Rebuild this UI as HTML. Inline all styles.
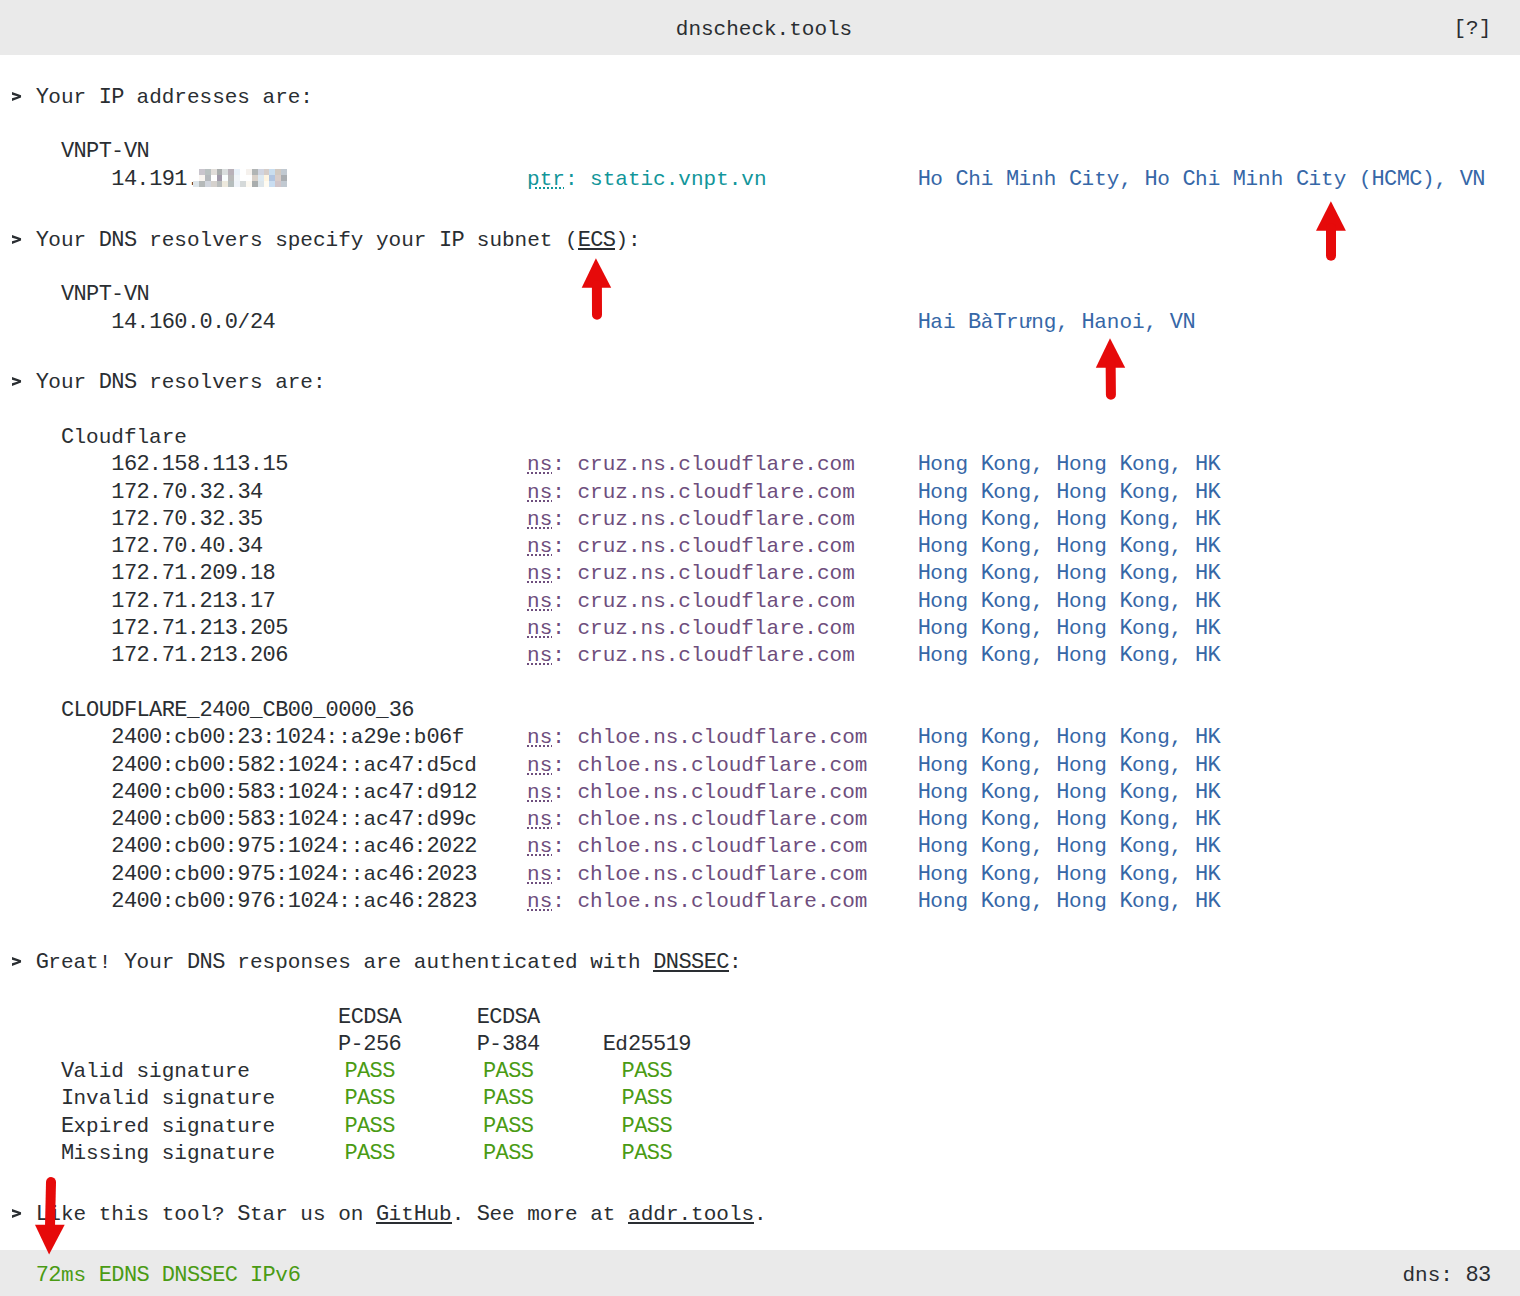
<!DOCTYPE html>
<html><head><meta charset="utf-8"><style>
html,body{margin:0;padding:0;background:#fff;width:1520px;height:1296px;overflow:hidden;position:relative}
body{font-family:"Liberation Mono",monospace;font-size:21.0px;color:#2a2e32}
.l{position:absolute;white-space:pre;line-height:27.3px;letter-spacing:0.000px}
.b{font-weight:bold;font-size:19px;letter-spacing:0.6px}
.c{font-size:22.0px;letter-spacing:-0.600px;line-height:0}
.teal{color:#12969a} .purp{color:#6e4e7d} .blue{color:#3667a7} .grn{color:#4a9b14}
u{text-decoration:none;position:relative}
u::after{content:'';position:absolute;left:0;right:0;top:19px;height:2px;background:currentColor}
.dt{text-decoration:underline dotted;text-decoration-thickness:2px;text-underline-offset:2px}
#hdr{position:absolute;left:0;top:0;width:1520px;height:55px;background:#eaeaea}
#ftr{position:absolute;left:0;top:1250px;width:1520px;height:46px;background:#eaeaea}
i{position:absolute;display:block}
svg{position:absolute;left:0;top:0}
</style></head><body>
<div id="hdr"></div>
<div id="ftr"></div>
<div class="l" style="left:675.8px;top:16.00px">dnscheck.tools</div>
<div class="l" style="left:1453.5px;top:15.00px">[?]</div>
<div class="l " style="left:35.70px;top:84.00px"><span class="c">Y</span>our <span class="c">IP</span> addresses are:</div>
<div class="l " style="left:60.90px;top:138.00px"><span class="c">VNPT</span>-<span class="c">VN</span></div>
<div class="l " style="left:111.30px;top:166.00px"><span class="c">14</span>.<span class="c">191</span>.</div>
<div class="l teal" style="left:527.10px;top:166.00px"><span class="dt">ptr</span>: static.vnpt.vn</div>
<div class="l blue" style="left:917.70px;top:166.00px"><span class="c">H</span>o <span class="c">C</span>hi <span class="c">M</span>inh <span class="c">C</span>ity, <span class="c">H</span>o <span class="c">C</span>hi <span class="c">M</span>inh <span class="c">C</span>ity (<span class="c">HCMC</span>), <span class="c">VN</span></div>
<div class="l " style="left:35.70px;top:227.00px"><span class="c">Y</span>our <span class="c">DNS</span> resolvers specify your <span class="c">IP</span> subnet (<u><span class="c">ECS</span></u>):</div>
<div class="l " style="left:60.90px;top:281.00px"><span class="c">VNPT</span>-<span class="c">VN</span></div>
<div class="l " style="left:111.30px;top:309.00px"><span class="c">14</span>.<span class="c">160</span>.<span class="c">0</span>.<span class="c">0</span>/<span class="c">24</span></div>
<div class="l blue" style="left:917.70px;top:309.00px"><span class="c">H</span>ai <span class="c">B</span>à<span class="c">T</span>rưng, <span class="c">H</span>anoi, <span class="c">VN</span></div>
<div class="l " style="left:35.70px;top:369.00px"><span class="c">Y</span>our <span class="c">DNS</span> resolvers are:</div>
<div class="l " style="left:60.90px;top:424.00px"><span class="c">C</span>loudflare</div>
<div class="l " style="left:111.30px;top:451.00px"><span class="c">162</span>.<span class="c">158</span>.<span class="c">113</span>.<span class="c">15</span></div>
<div class="l purp" style="left:527.10px;top:451.00px"><span class="dt">ns</span>: cruz.ns.cloudflare.com</div>
<div class="l blue" style="left:917.70px;top:451.00px"><span class="c">H</span>ong <span class="c">K</span>ong, <span class="c">H</span>ong <span class="c">K</span>ong, <span class="c">HK</span></div>
<div class="l " style="left:111.30px;top:479.00px"><span class="c">172</span>.<span class="c">70</span>.<span class="c">32</span>.<span class="c">34</span></div>
<div class="l purp" style="left:527.10px;top:479.00px"><span class="dt">ns</span>: cruz.ns.cloudflare.com</div>
<div class="l blue" style="left:917.70px;top:479.00px"><span class="c">H</span>ong <span class="c">K</span>ong, <span class="c">H</span>ong <span class="c">K</span>ong, <span class="c">HK</span></div>
<div class="l " style="left:111.30px;top:506.00px"><span class="c">172</span>.<span class="c">70</span>.<span class="c">32</span>.<span class="c">35</span></div>
<div class="l purp" style="left:527.10px;top:506.00px"><span class="dt">ns</span>: cruz.ns.cloudflare.com</div>
<div class="l blue" style="left:917.70px;top:506.00px"><span class="c">H</span>ong <span class="c">K</span>ong, <span class="c">H</span>ong <span class="c">K</span>ong, <span class="c">HK</span></div>
<div class="l " style="left:111.30px;top:533.00px"><span class="c">172</span>.<span class="c">70</span>.<span class="c">40</span>.<span class="c">34</span></div>
<div class="l purp" style="left:527.10px;top:533.00px"><span class="dt">ns</span>: cruz.ns.cloudflare.com</div>
<div class="l blue" style="left:917.70px;top:533.00px"><span class="c">H</span>ong <span class="c">K</span>ong, <span class="c">H</span>ong <span class="c">K</span>ong, <span class="c">HK</span></div>
<div class="l " style="left:111.30px;top:560.00px"><span class="c">172</span>.<span class="c">71</span>.<span class="c">209</span>.<span class="c">18</span></div>
<div class="l purp" style="left:527.10px;top:560.00px"><span class="dt">ns</span>: cruz.ns.cloudflare.com</div>
<div class="l blue" style="left:917.70px;top:560.00px"><span class="c">H</span>ong <span class="c">K</span>ong, <span class="c">H</span>ong <span class="c">K</span>ong, <span class="c">HK</span></div>
<div class="l " style="left:111.30px;top:588.00px"><span class="c">172</span>.<span class="c">71</span>.<span class="c">213</span>.<span class="c">17</span></div>
<div class="l purp" style="left:527.10px;top:588.00px"><span class="dt">ns</span>: cruz.ns.cloudflare.com</div>
<div class="l blue" style="left:917.70px;top:588.00px"><span class="c">H</span>ong <span class="c">K</span>ong, <span class="c">H</span>ong <span class="c">K</span>ong, <span class="c">HK</span></div>
<div class="l " style="left:111.30px;top:615.00px"><span class="c">172</span>.<span class="c">71</span>.<span class="c">213</span>.<span class="c">205</span></div>
<div class="l purp" style="left:527.10px;top:615.00px"><span class="dt">ns</span>: cruz.ns.cloudflare.com</div>
<div class="l blue" style="left:917.70px;top:615.00px"><span class="c">H</span>ong <span class="c">K</span>ong, <span class="c">H</span>ong <span class="c">K</span>ong, <span class="c">HK</span></div>
<div class="l " style="left:111.30px;top:642.00px"><span class="c">172</span>.<span class="c">71</span>.<span class="c">213</span>.<span class="c">206</span></div>
<div class="l purp" style="left:527.10px;top:642.00px"><span class="dt">ns</span>: cruz.ns.cloudflare.com</div>
<div class="l blue" style="left:917.70px;top:642.00px"><span class="c">H</span>ong <span class="c">K</span>ong, <span class="c">H</span>ong <span class="c">K</span>ong, <span class="c">HK</span></div>
<div class="l " style="left:60.90px;top:697.00px"><span class="c">CLOUDFLARE</span>_<span class="c">2400</span>_<span class="c">CB00</span>_<span class="c">0000</span>_<span class="c">36</span></div>
<div class="l " style="left:111.30px;top:724.00px"><span class="c">2400</span>:cb<span class="c">00</span>:<span class="c">23</span>:<span class="c">1024</span>::a<span class="c">29</span>e:b<span class="c">06</span>f</div>
<div class="l purp" style="left:527.10px;top:724.00px"><span class="dt">ns</span>: chloe.ns.cloudflare.com</div>
<div class="l blue" style="left:917.70px;top:724.00px"><span class="c">H</span>ong <span class="c">K</span>ong, <span class="c">H</span>ong <span class="c">K</span>ong, <span class="c">HK</span></div>
<div class="l " style="left:111.30px;top:752.00px"><span class="c">2400</span>:cb<span class="c">00</span>:<span class="c">582</span>:<span class="c">1024</span>::ac<span class="c">47</span>:d<span class="c">5</span>cd</div>
<div class="l purp" style="left:527.10px;top:752.00px"><span class="dt">ns</span>: chloe.ns.cloudflare.com</div>
<div class="l blue" style="left:917.70px;top:752.00px"><span class="c">H</span>ong <span class="c">K</span>ong, <span class="c">H</span>ong <span class="c">K</span>ong, <span class="c">HK</span></div>
<div class="l " style="left:111.30px;top:779.00px"><span class="c">2400</span>:cb<span class="c">00</span>:<span class="c">583</span>:<span class="c">1024</span>::ac<span class="c">47</span>:d<span class="c">912</span></div>
<div class="l purp" style="left:527.10px;top:779.00px"><span class="dt">ns</span>: chloe.ns.cloudflare.com</div>
<div class="l blue" style="left:917.70px;top:779.00px"><span class="c">H</span>ong <span class="c">K</span>ong, <span class="c">H</span>ong <span class="c">K</span>ong, <span class="c">HK</span></div>
<div class="l " style="left:111.30px;top:806.00px"><span class="c">2400</span>:cb<span class="c">00</span>:<span class="c">583</span>:<span class="c">1024</span>::ac<span class="c">47</span>:d<span class="c">99</span>c</div>
<div class="l purp" style="left:527.10px;top:806.00px"><span class="dt">ns</span>: chloe.ns.cloudflare.com</div>
<div class="l blue" style="left:917.70px;top:806.00px"><span class="c">H</span>ong <span class="c">K</span>ong, <span class="c">H</span>ong <span class="c">K</span>ong, <span class="c">HK</span></div>
<div class="l " style="left:111.30px;top:833.00px"><span class="c">2400</span>:cb<span class="c">00</span>:<span class="c">975</span>:<span class="c">1024</span>::ac<span class="c">46</span>:<span class="c">2022</span></div>
<div class="l purp" style="left:527.10px;top:833.00px"><span class="dt">ns</span>: chloe.ns.cloudflare.com</div>
<div class="l blue" style="left:917.70px;top:833.00px"><span class="c">H</span>ong <span class="c">K</span>ong, <span class="c">H</span>ong <span class="c">K</span>ong, <span class="c">HK</span></div>
<div class="l " style="left:111.30px;top:861.00px"><span class="c">2400</span>:cb<span class="c">00</span>:<span class="c">975</span>:<span class="c">1024</span>::ac<span class="c">46</span>:<span class="c">2023</span></div>
<div class="l purp" style="left:527.10px;top:861.00px"><span class="dt">ns</span>: chloe.ns.cloudflare.com</div>
<div class="l blue" style="left:917.70px;top:861.00px"><span class="c">H</span>ong <span class="c">K</span>ong, <span class="c">H</span>ong <span class="c">K</span>ong, <span class="c">HK</span></div>
<div class="l " style="left:111.30px;top:888.00px"><span class="c">2400</span>:cb<span class="c">00</span>:<span class="c">976</span>:<span class="c">1024</span>::ac<span class="c">46</span>:<span class="c">2823</span></div>
<div class="l purp" style="left:527.10px;top:888.00px"><span class="dt">ns</span>: chloe.ns.cloudflare.com</div>
<div class="l blue" style="left:917.70px;top:888.00px"><span class="c">H</span>ong <span class="c">K</span>ong, <span class="c">H</span>ong <span class="c">K</span>ong, <span class="c">HK</span></div>
<div class="l " style="left:35.70px;top:949.00px"><span class="c">G</span>reat! <span class="c">Y</span>our <span class="c">DNS</span> responses are authenticated with <u><span class="c">DNSSEC</span></u>:</div>
<div class="l " style="left:338.10px;top:1004.00px"><span class="c">ECDSA</span></div>
<div class="l " style="left:476.70px;top:1004.00px"><span class="c">ECDSA</span></div>
<div class="l " style="left:338.10px;top:1031.00px"><span class="c">P</span>-<span class="c">256</span></div>
<div class="l " style="left:476.70px;top:1031.00px"><span class="c">P</span>-<span class="c">384</span></div>
<div class="l " style="left:602.70px;top:1031.00px"><span class="c">E</span>d<span class="c">25519</span></div>
<div class="l " style="left:60.90px;top:1058.00px"><span class="c">V</span>alid signature</div>
<div class="l grn" style="left:344.40px;top:1058.00px"><span class="c">PASS</span></div>
<div class="l grn" style="left:483.00px;top:1058.00px"><span class="c">PASS</span></div>
<div class="l grn" style="left:621.60px;top:1058.00px"><span class="c">PASS</span></div>
<div class="l " style="left:60.90px;top:1085.00px"><span class="c">I</span>nvalid signature</div>
<div class="l grn" style="left:344.40px;top:1085.00px"><span class="c">PASS</span></div>
<div class="l grn" style="left:483.00px;top:1085.00px"><span class="c">PASS</span></div>
<div class="l grn" style="left:621.60px;top:1085.00px"><span class="c">PASS</span></div>
<div class="l " style="left:60.90px;top:1113.00px"><span class="c">E</span>xpired signature</div>
<div class="l grn" style="left:344.40px;top:1113.00px"><span class="c">PASS</span></div>
<div class="l grn" style="left:483.00px;top:1113.00px"><span class="c">PASS</span></div>
<div class="l grn" style="left:621.60px;top:1113.00px"><span class="c">PASS</span></div>
<div class="l " style="left:60.90px;top:1140.00px"><span class="c">M</span>issing signature</div>
<div class="l grn" style="left:344.40px;top:1140.00px"><span class="c">PASS</span></div>
<div class="l grn" style="left:483.00px;top:1140.00px"><span class="c">PASS</span></div>
<div class="l grn" style="left:621.60px;top:1140.00px"><span class="c">PASS</span></div>
<div class="l " style="left:35.70px;top:1201.00px"><span class="c">L</span>ike this tool? <span class="c">S</span>tar us on <u><span class="c">G</span>it<span class="c">H</span>ub</u>. <span class="c">S</span>ee more at <u>addr.tools</u>.</div>
<div class="l grn" style="left:35.70px;top:1262.00px"><span class="c">72</span>ms <span class="c">EDNS</span> <span class="c">DNSSEC</span> <span class="c">IP</span>v<span class="c">6</span></div>
<div class="l" style="left:1402.5px;top:1262.00px">dns: <span class="c">83</span></div>
<i style="left:198.88px;top:169.00px;width:6.17px;height:6.0px;background:#c9c5cd"></i><i style="left:204.75px;top:169.00px;width:6.17px;height:6.0px;background:#b9c1c1"></i><i style="left:210.62px;top:169.00px;width:6.17px;height:6.0px;background:#e1ddd9"></i><i style="left:216.50px;top:169.00px;width:6.17px;height:6.0px;background:#a9adad"></i><i style="left:222.38px;top:169.00px;width:6.17px;height:6.0px;background:#d9dddd"></i><i style="left:228.25px;top:169.00px;width:6.17px;height:6.0px;background:#b9b1b9"></i><i style="left:234.12px;top:169.00px;width:6.17px;height:6.0px;background:#e9f1f9"></i><i style="left:245.88px;top:169.00px;width:6.17px;height:6.0px;background:#f5f1ed"></i><i style="left:251.75px;top:169.00px;width:6.17px;height:6.0px;background:#b1b5b5"></i><i style="left:257.62px;top:169.00px;width:6.17px;height:6.0px;background:#d1d5e1"></i><i style="left:263.50px;top:169.00px;width:6.17px;height:6.0px;background:#d5cdc9"></i><i style="left:269.38px;top:169.00px;width:6.17px;height:6.0px;background:#c9ddee"></i><i style="left:275.25px;top:169.00px;width:6.17px;height:6.0px;background:#d1c9c1"></i><i style="left:281.12px;top:169.00px;width:6.17px;height:6.0px;background:#c1c9d1"></i><i style="left:198.88px;top:175.00px;width:6.17px;height:6.0px;background:#f9f5f1"></i><i style="left:204.75px;top:175.00px;width:6.17px;height:6.0px;background:#b5b9bd"></i><i style="left:216.50px;top:175.00px;width:6.17px;height:6.0px;background:#a199a9"></i><i style="left:222.38px;top:175.00px;width:6.17px;height:6.0px;background:#f9fdfd"></i><i style="left:228.25px;top:175.00px;width:6.17px;height:6.0px;background:#b9b9b9"></i><i style="left:234.12px;top:175.00px;width:6.17px;height:6.0px;background:#f1f5f9"></i><i style="left:251.75px;top:175.00px;width:6.17px;height:6.0px;background:#d9d1c9"></i><i style="left:257.62px;top:175.00px;width:6.17px;height:6.0px;background:#dde9f1"></i><i style="left:263.50px;top:175.00px;width:6.17px;height:6.0px;background:#fff5e1"></i><i style="left:269.38px;top:175.00px;width:6.17px;height:6.0px;background:#b1c5e1"></i><i style="left:275.25px;top:175.00px;width:6.17px;height:6.0px;background:#d9cdc9"></i><i style="left:281.12px;top:175.00px;width:6.17px;height:6.0px;background:#a9adb1"></i><i style="left:193.00px;top:181.00px;width:6.17px;height:6.0px;background:#dde5e9"></i><i style="left:198.88px;top:181.00px;width:6.17px;height:6.0px;background:#b5b9b9"></i><i style="left:204.75px;top:181.00px;width:6.17px;height:6.0px;background:#d1d5dd"></i><i style="left:210.62px;top:181.00px;width:6.17px;height:6.0px;background:#d5d1cd"></i><i style="left:216.50px;top:181.00px;width:6.17px;height:6.0px;background:#b9bdbd"></i><i style="left:222.38px;top:181.00px;width:6.17px;height:6.0px;background:#ede9dd"></i><i style="left:228.25px;top:181.00px;width:6.17px;height:6.0px;background:#b5bdbd"></i><i style="left:234.12px;top:181.00px;width:6.17px;height:6.0px;background:#eff3f9"></i><i style="left:240.00px;top:181.00px;width:6.17px;height:6.0px;background:#d5d9d9"></i><i style="left:245.88px;top:181.00px;width:6.17px;height:6.0px;background:#fdf9f1"></i><i style="left:251.75px;top:181.00px;width:6.17px;height:6.0px;background:#a9adad"></i><i style="left:257.62px;top:181.00px;width:6.17px;height:6.0px;background:#dde5e9"></i><i style="left:263.50px;top:181.00px;width:6.17px;height:6.0px;background:#fffbf1"></i><i style="left:269.38px;top:181.00px;width:6.17px;height:6.0px;background:#c9ddf1"></i><i style="left:275.25px;top:181.00px;width:6.17px;height:6.0px;background:#d1c5c9"></i><i style="left:281.12px;top:181.00px;width:6.17px;height:6.0px;background:#c1c9d1"></i>
<svg width="1520" height="1296" viewBox="0 0 1520 1296"><polygon transform="translate(0,0)" points="12,92 21.05,95.3 21.05,97.6 12,101 12,98.3 18.1,96.45 12,94.7" fill="#2a2e32"/><polygon transform="translate(0,143)" points="12,92 21.05,95.3 21.05,97.6 12,101 12,98.3 18.1,96.45 12,94.7" fill="#2a2e32"/><polygon transform="translate(0,285)" points="12,92 21.05,95.3 21.05,97.6 12,101 12,98.3 18.1,96.45 12,94.7" fill="#2a2e32"/><polygon transform="translate(0,865)" points="12,92 21.05,95.3 21.05,97.6 12,101 12,98.3 18.1,96.45 12,94.7" fill="#2a2e32"/><polygon transform="translate(0,1117)" points="12,92 21.05,95.3 21.05,97.6 12,101 12,98.3 18.1,96.45 12,94.7" fill="#2a2e32"/><g fill="#e60a0a" stroke="#e60a0a" stroke-width="0"><polygon points="1330.9,201.3 1345.9,230.8 1316.0,230.8"/><line stroke="#e60a0a" stroke-width="10" stroke-linecap="round" x1="1331.0" y1="228" x2="1331.0" y2="255.8"/><polygon points="595.9,258.3 611.2,287.7 581.7,287.7"/><line stroke="#e60a0a" stroke-width="10" stroke-linecap="round" x1="596.9" y1="285" x2="597.0" y2="314.8"/><polygon points="1110.0,338.3 1125.2,367.7 1095.8,367.7"/><line stroke="#e60a0a" stroke-width="10" stroke-linecap="round" x1="1110.65" y1="365" x2="1110.9" y2="394.8"/><polygon points="49.1,1254.5 64.7,1224.8 35.0,1224.8"/><line stroke="#e60a0a" stroke-width="10" stroke-linecap="round" x1="50.0" y1="1227" x2="51.0" y2="1182.0"/></g></svg>
</body></html>
